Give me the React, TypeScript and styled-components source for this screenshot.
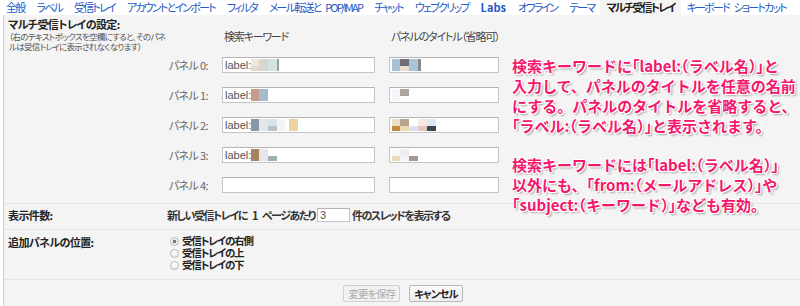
import styled, { createGlobalStyle } from 'styled-components';

const GlobalStyle = createGlobalStyle`
  html, body {
    margin: 0;
    padding: 0;
    background: #ffffff;
  }
  body {
    font-family: "Noto Sans CJK JP", "Liberation Sans", sans-serif;
    font-size: 11px;
    color: #222;
  }
`;

type Cell = { w: number; top: string; bottom?: string };

type Panel = { keyword?: Cell[]; title?: Cell[] };

const tabs = [
  { label: '全般' },
  { label: 'ラベル' },
  { label: '受信トレイ' },
  { label: 'アカウントとインポート' },
  { label: 'フィルタ' },
  { label: 'メール転送と POP/IMAP' },
  { label: 'チャット' },
  { label: 'ウェブクリップ' },
  { label: 'Labs', strong: true },
  { label: 'オフライン' },
  { label: 'テーマ' },
  { label: 'マルチ受信トレイ', active: true },
  { label: 'キーボード ショートカット' },
];

// blurred label names, drawn as mosaic cells
const panels: Panel[] = [
  {
    keyword: [
      { w: 8, top: '#f1e9dc', bottom: '#e4dccb' },
      { w: 9, top: '#d9d6cf' },
      { w: 9, top: '#d2e3e3' },
      { w: 2, top: '#9a9a9a' },
    ],
    title: [
      { w: 8, top: '#a9c1d4' },
      { w: 9, top: '#6f6e76', bottom: '#e9e0d0' },
      { w: 9, top: '#a9c4d6' },
      { w: 3, top: '#8a8a8a' },
    ],
  },
  {
    keyword: [
      { w: 8, top: '#c99a8a' },
      { w: 9, top: '#a7bacc' },
    ],
    title: [
      { w: 8, top: '#f4f8fc' },
      { w: 9, top: '#aba59d', bottom: '#ffffff' },
    ],
  },
  {
    keyword: [
      { w: 8, top: '#8898a8' },
      { w: 9, top: '#e6e6e6' },
      { w: 9, top: '#d4e4ec', bottom: '#b8c4c8' },
      { w: 8, top: '#f4f4f4' },
      { w: 4, top: '#ffffff' },
      { w: 9, top: '#ecd4a0' },
    ],
    title: [
      { w: 8, top: '#ecdcc4', bottom: '#c48a44' },
      { w: 9, top: '#b4a48c', bottom: '#ecd8b4' },
      { w: 9, top: '#ffffff', bottom: '#d8e4f0' },
      { w: 9, top: '#f4e8e0', bottom: '#e4c4bc' },
      { w: 9, top: '#dce8f4', bottom: '#3c4850' },
    ],
  },
  {
    keyword: [
      { w: 8, top: '#a4855e' },
      { w: 9, top: '#e6e6e6' },
      { w: 9, top: '#ffffff', bottom: '#9fb0b4' },
    ],
    title: [
      { w: 8, top: '#f8f8f8', bottom: '#ecdcbc' },
      { w: 9, top: '#eeeeee', bottom: '#f4f4f4' },
      { w: 9, top: '#ffffff', bottom: '#a49890' },
    ],
  },
  {},
];

const positions = ['受信トレイの右側', '受信トレイの上', '受信トレイの下'];

const Mosaic = ({ cells }: { cells: Cell[] }) => (
  <MosaicStrip>
    {cells.map((c, i) => (
      <MosaicCell key={i} $w={c.w} $top={c.top} $bottom={c.bottom ?? c.top} />
    ))}
  </MosaicStrip>
);

const App = () => (
  <>
    <GlobalStyle />
    <Page>
      <TabBar>
        {tabs.map((t) => (
          <Tab key={t.label} $active={t.active} $strong={t.strong}>
            {t.label}
          </Tab>
        ))}
      </TabBar>

      <Main>
        <Section $pad="2px 0 10px">
          <SideCell>
            <Heading>マルチ受信トレイの設定:</Heading>
            <Note>
              （右のテキストボックスを空欄にすると、そのパネ
              <br />
              ルは受信トレイに表示されなくなります）
            </Note>
          </SideCell>
          <PanelGrid>
            <span />
            <ColumnHead>検索キーワード</ColumnHead>
            <ColumnHead>パネルのタイトル（省略可）</ColumnHead>
            {panels.map((p, i) => (
              <PanelRow key={i}>
                <PanelLabel>パネル {i}:</PanelLabel>
                <Field $w={153}>
                  {p.keyword && (
                    <>
                      label:
                      <Mosaic cells={p.keyword} />
                    </>
                  )}
                </Field>
                <Field $w={110}>{p.title && <Mosaic cells={p.title} />}</Field>
              </PanelRow>
            ))}
          </PanelGrid>
        </Section>

        <Section $pad="4px 0 7px">
          <SideCell>
            <Heading>表示件数:</Heading>
          </SideCell>
          <InlineRow>
            新しい受信トレイに 1 ページあたり
            <Field $w={33} $h={14}>3</Field>
            件のスレッドを表示する
          </InlineRow>
        </Section>

        <Section $pad="5px 0 8px">
          <SideCell>
            <Heading>追加パネルの位置:</Heading>
          </SideCell>
          <RadioList>
            {positions.map((p, i) => (
              <RadioOption key={p}>
                <Radio $checked={i === 0} />
                {p}
              </RadioOption>
            ))}
          </RadioList>
        </Section>

        <Actions>
          <Button disabled>変更を保存</Button>
          <Button $primary>キャンセル</Button>
        </Actions>

        <Callout>
          <p>
            検索キーワードに<Br>「</Br>label:<Br>（</Br>ラベル名<Br>）</Br><Br>」</Br>と
            <br />
            入力して、パネルのタイトルを任意の名前
            <br />
            にする。パネルのタイトルを省略すると、
            <br />
            <Br>「</Br>ラベル:<Br>（</Br>ラベル名<Br>）</Br><Br>」</Br>と表示されます。
          </p>
          <p>
            検索キーワードには<Br>「</Br>label:<Br>（</Br>ラベル名<Br>）</Br><Br>」</Br>
            <br />
            以外にも、<Br>「</Br>from:<Br>（</Br>メールアドレス<Br>）</Br><Br>」</Br>や
            <br />
            <Br>「</Br>subject:<Br>（</Br>キーワード<Br>）</Br><Br>」</Br>なども有効。
          </p>
        </Callout>
      </Main>
    </Page>
  </>
);

const Page = styled.div`
  width: 800px;
  height: 306px;
  overflow: hidden;
  background: #ffffff;
`;

const TabBar = styled.nav`
  display: flex;
  height: 15px;
  background: #ffffff;
  white-space: nowrap;
`;

const Tab = styled.span<{ $active?: boolean; $strong?: boolean }>`
  padding: 0 6px;
  line-height: 15px;
  font-size: 11px;
  letter-spacing: ${(p) => (p.$strong ? '0' : '-1.8px')};
  word-spacing: 4px;
  font-feature-settings: "palt";
  color: ${(p) => (p.$active ? '#222' : '#2459c6')};
  font-weight: ${(p) => (p.$strong || p.$active ? 700 : 400)};
  background: ${(p) => (p.$active ? '#f4f4f4' : 'transparent')};
`;

const Main = styled.main`
  position: relative;
  margin-left: 3px;
  border-left: 1px solid #d0d0d0;
  height: 291px;
  background: #f4f4f4;
`;

const Section = styled.section<{ $pad: string }>`
  display: grid;
  grid-template-columns: 159px 1fr;
  align-items: start;
  padding: ${(p) => p.$pad};
  padding-left: 4px;
  border-bottom: 1px solid #e4e4e4;
`;

const SideCell = styled.div`
  display: flex;
  flex-direction: column;
`;

const Heading = styled.div`
  font-size: 11px;
  line-height: 14px;
  font-weight: 700;
  color: #222;
  font-feature-settings: "palt";
  letter-spacing: -0.6px;
  white-space: nowrap;
`;

const Note = styled.div`
  padding-left: 1px;
  font-size: 8.5px;
  line-height: 10px;
  color: #555;
  font-feature-settings: "palt";
  letter-spacing: -0.7px;
  white-space: nowrap;
`;

const PanelGrid = styled.div`
  display: grid;
  grid-template-columns: 41px 153px 110px;
  column-gap: 14px;
  row-gap: 14px;
  margin-top: 13px;
  align-items: center;
`;

const PanelRow = styled.div`
  display: contents;
`;

const ColumnHead = styled.div`
  padding-left: 2px;
  font-size: 11px;
  line-height: 13px;
  color: #444;
  font-feature-settings: "palt";
  letter-spacing: -1.2px;
  white-space: nowrap;
`;

const PanelLabel = styled.div`
  text-align: right;
  font-size: 11px;
  line-height: 16px;
  color: #666;
  font-feature-settings: "palt";
  letter-spacing: -0.6px;
  white-space: nowrap;
`;

const Field = styled.div<{ $w: number; $h?: number }>`
  box-sizing: border-box;
  display: inline-flex;
  align-items: center;
  flex-shrink: 0;
  width: ${(p) => p.$w}px;
  height: ${(p) => p.$h ?? 16}px;
  padding-left: 2px;
  background: #ffffff;
  border: 1px solid #c4c4c4;
  border-top-color: #b4b4b4;
  font-family: "Liberation Sans", "Noto Sans CJK JP", sans-serif;
  font-size: 11px;
  font-weight: 400;
  letter-spacing: 0;
  color: #555;
  overflow: hidden;
`;

const MosaicStrip = styled.span`
  display: inline-flex;
  height: 12px;
`;

const MosaicCell = styled.span<{ $w: number; $top: string; $bottom: string }>`
  width: ${(p) => p.$w}px;
  background: linear-gradient(${(p) => p.$top} 0 55%, ${(p) => p.$bottom} 55% 100%);
`;

const InlineRow = styled.div`
  display: flex;
  align-items: center;
  gap: 2px;
  height: 14px;
  font-size: 11px;
  font-weight: 700;
  color: #333;
  font-feature-settings: "palt";
  letter-spacing: -1.5px;
  word-spacing: 4px;
  white-space: pre;
`;

const RadioList = styled.div`
  display: flex;
  flex-direction: column;
  padding-left: 3px;
`;

const RadioOption = styled.label`
  display: flex;
  align-items: center;
  gap: 3px;
  height: 12px;
  line-height: 12px;
  font-size: 10.5px;
  font-weight: 700;
  color: #222;
  font-feature-settings: "palt";
  letter-spacing: -1.2px;
`;

const Radio = styled.span<{ $checked?: boolean }>`
  box-sizing: border-box;
  width: 9px;
  height: 9px;
  border-radius: 50%;
  border: 1px solid #b8b8b8;
  background: ${(p) =>
    p.$checked
      ? 'radial-gradient(circle, #777 0 1.6px, #f2f2f2 2.2px)'
      : 'linear-gradient(#ffffff, #ececec)'};
`;

const Actions = styled.div`
  display: flex;
  justify-content: center;
  gap: 9px;
  padding-top: 5px;
  padding-left: 2px;
`;

const Button = styled.button<{ $primary?: boolean }>`
  box-sizing: border-box;
  height: 17px;
  padding: 0 4px;
  font-family: "Noto Sans CJK JP", sans-serif;
  font-size: 10.5px;
  line-height: 15px;
  font-feature-settings: "palt";
  letter-spacing: -1px;
  border-radius: 2px;
  border: 1px solid ${(p) => (p.$primary ? '#b8b8b8' : '#d0d0d0')};
  background: ${(p) => (p.$primary ? 'linear-gradient(#fafafa, #eeeeee)' : '#f2f2f2')};
  color: ${(p) => (p.$primary ? '#222' : '#aaa')};
  font-weight: ${(p) => (p.$primary ? 700 : 400)};
`;

const Callout = styled.div`
  position: absolute;
  left: 508px;
  top: 41px;
  font-size: 15px;
  line-height: 20px;
  font-weight: 700;
  color: #f3186c;
  white-space: nowrap;
  text-shadow:
    0 0 1px #fff,
    1px 1px 0 #fff,
    -1px -1px 0 #fff,
    1px -1px 0 #fff,
    -1px 1px 0 #fff,
    2px 2px 2px rgba(0, 0, 0, 0.35);

  p {
    margin: 0 0 19px;
  }
`;

const Br = styled.span`
  font-feature-settings: "halt";
`;

export default App;
